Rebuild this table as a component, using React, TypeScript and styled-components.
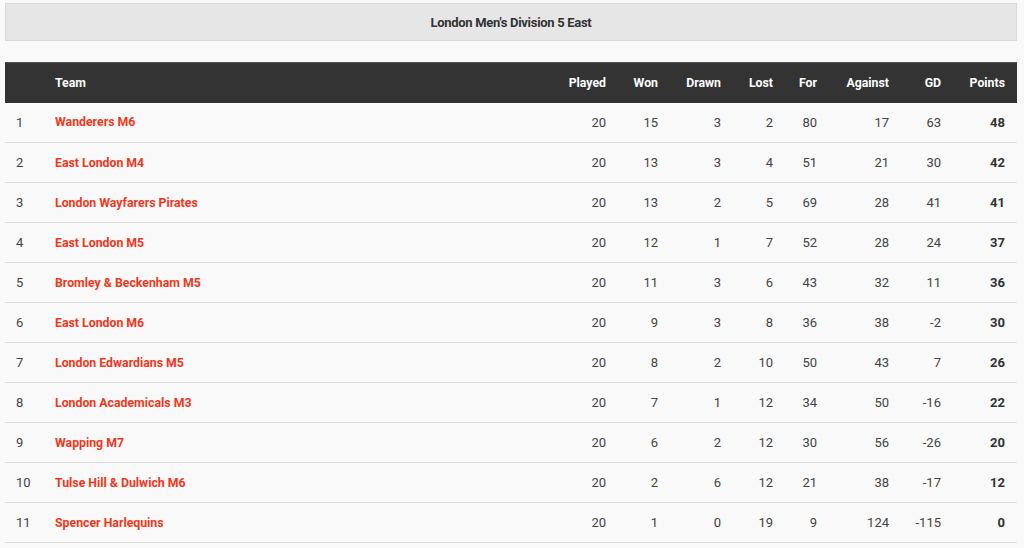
import styled, { createGlobalStyle } from "styled-components";

interface Team {
  name: string;
  played: number;
  won: number;
  drawn: number;
  lost: number;
  pointsFor: number;
  against: number;
  gd: number;
  points: number;
}

const teams: Team[] = [
  { name: "Wanderers M6", played: 20, won: 15, drawn: 3, lost: 2, pointsFor: 80, against: 17, gd: 63, points: 48 },
  { name: "East London M4", played: 20, won: 13, drawn: 3, lost: 4, pointsFor: 51, against: 21, gd: 30, points: 42 },
  { name: "London Wayfarers Pirates", played: 20, won: 13, drawn: 2, lost: 5, pointsFor: 69, against: 28, gd: 41, points: 41 },
  { name: "East London M5", played: 20, won: 12, drawn: 1, lost: 7, pointsFor: 52, against: 28, gd: 24, points: 37 },
  { name: "Bromley & Beckenham M5", played: 20, won: 11, drawn: 3, lost: 6, pointsFor: 43, against: 32, gd: 11, points: 36 },
  { name: "East London M6", played: 20, won: 9, drawn: 3, lost: 8, pointsFor: 36, against: 38, gd: -2, points: 30 },
  { name: "London Edwardians M5", played: 20, won: 8, drawn: 2, lost: 10, pointsFor: 50, against: 43, gd: 7, points: 26 },
  { name: "London Academicals M3", played: 20, won: 7, drawn: 1, lost: 12, pointsFor: 34, against: 50, gd: -16, points: 22 },
  { name: "Wapping M7", played: 20, won: 6, drawn: 2, lost: 12, pointsFor: 30, against: 56, gd: -26, points: 20 },
  { name: "Tulse Hill & Dulwich M6", played: 20, won: 2, drawn: 6, lost: 12, pointsFor: 21, against: 38, gd: -17, points: 12 },
  { name: "Spencer Harlequins", played: 20, won: 1, drawn: 0, lost: 19, pointsFor: 9, against: 124, gd: -115, points: 0 },
];

const columns: { label: string; width: number }[] = [
  { label: "Played", width: 70 },
  { label: "Won", width: 52 },
  { label: "Drawn", width: 63 },
  { label: "Lost", width: 52 },
  { label: "For", width: 44 },
  { label: "Against", width: 72 },
  { label: "GD", width: 52 },
  { label: "Points", width: 64 },
];

const App: React.FC = () => {
  return (
    <>
      <GlobalStyle />
      <Styled_Page>
        <Styled_Title>London Men's Division 5 East</Styled_Title>
        <Styled_Table>
          <colgroup>
            <col style={{ width: 38 }} />
            <col />
            {columns.map((c) => (
              <col key={c.label} style={{ width: c.width }} />
            ))}
          </colgroup>
          <thead>
            <tr>
              <Styled_HeadCell />
              <Styled_HeadCell $left>Team</Styled_HeadCell>
              {columns.map((c) => (
                <Styled_HeadCell key={c.label}>{c.label}</Styled_HeadCell>
              ))}
            </tr>
          </thead>
          <tbody>
            {teams.map((t, i) => (
              <Styled_Row key={t.name}>
                <Styled_RankCell>{i + 1}</Styled_RankCell>
                <Styled_TeamCell>{t.name}</Styled_TeamCell>
                <Styled_Cell>{t.played}</Styled_Cell>
                <Styled_Cell>{t.won}</Styled_Cell>
                <Styled_Cell>{t.drawn}</Styled_Cell>
                <Styled_Cell>{t.lost}</Styled_Cell>
                <Styled_Cell>{t.pointsFor}</Styled_Cell>
                <Styled_Cell>{t.against}</Styled_Cell>
                <Styled_Cell>{t.gd}</Styled_Cell>
                <Styled_Cell $bold>{t.points}</Styled_Cell>
              </Styled_Row>
            ))}
          </tbody>
        </Styled_Table>
      </Styled_Page>
    </>
  );
};

export default App;

const GlobalStyle = createGlobalStyle`
  body {
    margin: 0;
    background: #f9f9f9;
    font-family: Roboto, "Liberation Sans", sans-serif;
  }
`;

const Styled_Page = styled.div`
  padding: 3px 7px 0 5px;
  display: flex;
  flex-direction: column;
  gap: 21px;
`;

const Styled_Title = styled.div`
  height: 36px;
  border: 1px solid #d9d9d9;
  background: #e6e6e6;
  display: flex;
  align-items: center;
  justify-content: center;
  font-size: 13px;
  font-weight: 700;
  color: #333;
  letter-spacing: -0.3px;
`;

const Styled_Table = styled.table`
  width: 1012px;
  border-collapse: collapse;
  table-layout: fixed;
  font-size: 13px;
`;

const Styled_HeadCell = styled.th<{ $left?: boolean }>`
  height: 40px;
  padding: 0 12px 0 ${(p) => (p.$left ? "12px" : "0")};
  background: #333333;
  color: #fff;
  font-size: 12.3px;
  font-weight: 700;
  text-align: ${(p) => (p.$left ? "left" : "right")};
  border-top: 1px solid #555;
  box-sizing: border-box;
`;

const Styled_Row = styled.tr`
  height: 40px;
  border-bottom: 1px solid #dddddd;
`;

const Styled_RankCell = styled.td`
  padding: 0 0 0 11px;
  color: #444;
`;

const Styled_TeamCell = styled.td`
  padding: 0 12px;
  color: #f2381c;
  font-size: 12.3px;
  font-weight: 700;
`;

const Styled_Cell = styled.td<{ $bold?: boolean }>`
  padding: 0 12px 0 0;
  text-align: right;
  color: ${(p) => (p.$bold ? "#333" : "#444")};
  font-weight: ${(p) => (p.$bold ? 700 : 400)};
`;
